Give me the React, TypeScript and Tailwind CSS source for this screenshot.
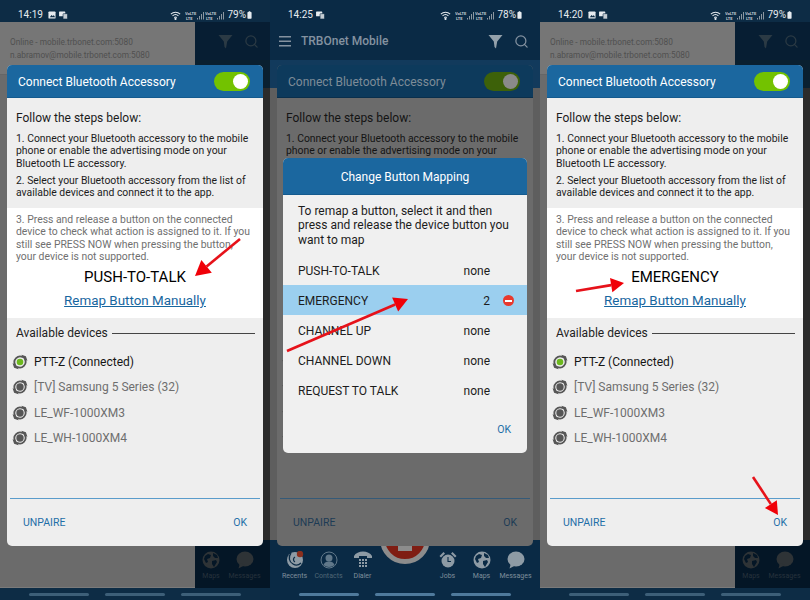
import { Search } from "lucide-react";

const font = "font-['Roboto',sans-serif]";

const SignalIcon = () => (
  <svg width="19" height="9" viewBox="0 0 19 9" className="ml-[1px]">
    <text x="0" y="4" fontSize="4" fontFamily="Roboto" fontWeight="700" fill="#c2cad1">VoLTE</text>
    <text x="1" y="8.5" fontSize="4" fontFamily="Roboto" fontWeight="700" fill="#c2cad1">LTE</text>
    <path d="M12 8.5h1V7h-1zM14 8.5h1V5h-1zM16 8.5h1V3h-1zM18 8.5h1V1h-1z" fill="#8b97a1" />
  </svg>
);

const StatusBar = ({ time, pct, photo }: { time: string; pct: string; photo: boolean }) => (
  <div className="h-[22px] shrink-0 flex items-center pl-[18px] pr-[18px] text-[#e6ebef] pt-[8px]">
    <span className="text-[10px] leading-none">{time}</span>
    {photo && (
      <svg width="8" height="8" viewBox="0 0 9 9" className="ml-[5px]">
        <rect x="0.5" y="0.5" width="8" height="8" rx="1" fill="#e6ebef" />
        <path d="M2 7l2-2.5 1.5 1.5L6.5 4.500 8 7z" fill="#0d2c45" />
      </svg>
    )}
    <svg width="9" height="8" viewBox="0 0 10 9" className="ml-[3px]">
      <rect x="0" y="0.5" width="7" height="5.5" rx="0.5" fill="#e6ebef" />
      <rect x="4.5" y="3" width="5" height="6" rx="0.5" fill="#c4ccd3" stroke="#0d2c45" strokeWidth="0.7" />
    </svg>
    <div className="ml-auto flex items-center">
      <svg width="11" height="9" viewBox="0 0 13 10" fill="none" stroke="#e6ebef" strokeWidth="1.2" className="mr-[3px]">
        <path d="M1 3.5C4 .5 9 .5 12 3.5M3 5.500c2-2 5-2 7 0M5 7.500c1-1 2-1 3 0" />
        <circle cx="6.5" cy="9" r="0.7" fill="#e6ebef" />
      </svg>
      <SignalIcon />
      <SignalIcon />
      <span className="text-[10px] leading-none ml-[3px]">{pct}</span>
      <svg width="5" height="8" viewBox="0 0 6 9" className="ml-[1px]">
        <rect x="0.5" y="1" width="5" height="8" rx="0.8" fill="#e6ebef" />
        <rect x="2" y="0" width="2" height="1" fill="#e6ebef" />
      </svg>
    </div>
  </div>
);

const Funnel = ({ color }: { color: string }) => (
  <svg width="15" height="15" viewBox="0 0 15 15">
    <path d="M0.5 1h14L9.2 7.500 8 14.500 6.500 13 5.800 7.500z" fill={color} />
  </svg>
);

const BtIcon = ({ on, ring = "#565656" }: { on?: boolean; ring?: string }) => (
  <svg width="16" height="16" viewBox="0 0 16 16" className="shrink-0">
    <path d="M3.300 11A5.600 5.600 0 0 1 11 3.300M12.700 5A5.600 5.600 0 0 1 5 12.700" fill="none" stroke={ring} strokeWidth="1.800" />
    <path d="M0.600 9.300l1.500 4.400 4.400 1.500-1-2.600-2.300-2.300zM15.400 6.700l-1.500-4.400-4.400-1.500 1 2.600 2.300 2.300z" fill={ring} />
    <circle cx="8" cy="8" r={on ? 3.3 : 3.7} fill={on ? "#6cb81e" : ring} />
  </svg>
);

const Toggle = ({ dim }: { dim?: boolean }) => (
  <div className={`w-[36px] h-[19px] rounded-full flex items-center justify-end pr-[2px] ${dim ? "bg-[#3d6109]" : "bg-[#73c200]"}`}>
    <div className={`w-[15px] h-[15px] rounded-full ${dim ? "bg-[#8a8a8a]" : "bg-white"}`} />
  </div>
);

const devices = ["[TV] Samsung 5 Series (32)", "LE_WF-1000XM3", "LE_WH-1000XM4"];

const Arrow = ({ x1, y1, x2, y2, size = 13 }: { x1: number; y1: number; x2: number; y2: number; size?: number }) => {
  const a = Math.atan2(y2 - y1, x2 - x1);
  const bx = x2 - Math.cos(a) * size;
  const by = y2 - Math.sin(a) * size;
  const w = size * 0.55;
  const p1 = `${bx - Math.sin(a) * w},${by + Math.cos(a) * w}`;
  const p2 = `${bx + Math.sin(a) * w},${by - Math.cos(a) * w}`;
  return (
    <svg width="270" height="600" viewBox="0 0 270 600" className="absolute left-0 top-0 pointer-events-none">
      <line x1={x1} y1={y1} x2={bx} y2={by} stroke="#e6121a" strokeWidth="2.6" />
      <polygon points={`${x2},${y2} ${p1} ${p2}`} fill="#f00008" />
    </svg>
  );
};

const DialogFooter = ({ dim }: { dim?: boolean }) => (
  <>
    <div className={`mt-auto mx-[3px] h-px ${dim ? "bg-[#355a78]" : "bg-[#5a9ccb]"}`} />
    <div className={`h-[47px] shrink-0 flex items-center justify-between pl-[16px] pr-[16px] pt-[1px] text-[10.5px] ${dim ? "text-[#1d3b55]" : "text-[#1f6fa8]"}`}>
      <span>UNPAIRE</span>
      <span>OK</span>
    </div>
  </>
);

const DialogHeader = ({ dim }: { dim?: boolean }) => (
  <div className={`h-[33px] shrink-0 flex items-center justify-between pl-[11px] pr-[13px] border-b ${dim ? "bg-[#0d3a5c] border-[#0a2f4c]" : "bg-[#1b679f] border-[#145a8e]"}`}>
    <span className={`text-[12px] pt-[1px] ${dim ? "text-[#7e8c98]" : "text-white"}`}>Connect Bluetooth Accessory</span>
    <Toggle dim={dim} />
  </div>
);

const ConnectDialog = ({ label }: { label: string }) => (
  <div className="absolute left-[7px] top-[65px] w-[256px] h-[481px] rounded-[5px] overflow-hidden flex flex-col bg-[#eeeeee]">
    <DialogHeader />
    <div className="px-[9px] pt-[12px] text-[10.4px] leading-[12.3px] h-[110px] shrink-0 text-[#1c1c1c]">
      <div className="text-[12px] leading-[16px] mb-[7px]">Follow the steps below:</div>
      <p className="mb-[5px]">1. Connect your Bluetooth accessory to the mobile phone or enable the advertising mode on your Bluetooth LE accessory.</p>
      <p>2. Select your Bluetooth accessory from the list of available devices and connect it to the app.</p>
    </div>
    <div className="h-[110px] shrink-0 px-[9px] pt-[6px] bg-white">
      <p className="text-[10.4px] leading-[12.3px] text-[#707070]">3. Press and release a button on the connected device to check what action is assigned to it. If you still see PRESS NOW when pressing the button, your device is not supported.</p>
      <div className="text-center text-[15px] leading-[17px] text-black mt-[6px]">{label}</div>
      <div className="text-center text-[13.4px] leading-[17px] text-[#17669f] underline mt-[6px]">Remap Button Manually</div>
    </div>
    <div className="flex items-center pl-[9px] pr-[8px] mt-[7px] text-[12px] leading-[16px] text-[#222]">
      <span>Available devices</span>
      <div className="flex-1 h-px bg-[#444] ml-[4px]" />
    </div>
    <div className="flex flex-col mt-[8px] pl-[5px]">
      <div className="h-[25.5px] flex items-center gap-[6px] text-[12px] text-[#151515]">
        <BtIcon on />
        PTT-Z (Connected)
      </div>
      {devices.map((d) => (
        <div key={d} className="h-[25.5px] flex items-center gap-[6px] text-[12px] text-[#6e6e6e]">
          <BtIcon />
          {d}
        </div>
      ))}
    </div>
    <DialogFooter />
  </div>
);

// same dialog dimmed behind the mapping dialog, only what still shows is drawn
const DimDialog = () => (
  <div className="absolute left-[7px] top-[65px] w-[256px] h-[481px] rounded-[5px] overflow-hidden flex flex-col bg-[#6b6b6b]">
    <DialogHeader dim />
    <div className="px-[9px] pt-[12px] text-[10.4px] leading-[12.3px] h-[250px] shrink-0 text-[#141414]">
      <div className="text-[12px] leading-[16px] mb-[7px]">Follow the steps below:</div>
      <p className="whitespace-nowrap">1. Connect your Bluetooth accessory to the mobile</p>
      <p className="whitespace-nowrap">phone or enable the advertising mode on your</p>
    </div>
    <div className="flex flex-col pl-[5px] mt-[-2px]">
      {[0, 1, 2, 3].map((i) => (
        <div key={i} className="h-[25.5px] flex items-center">
          <BtIcon ring="#222222" />
        </div>
      ))}
    </div>
    <DialogFooter dim />
  </div>
);

const NavIcon = ({ name }: { name: string }) => {
  const c = "#8e9ba5";
  const bg = "#0a2a45";
  if (name === "Recents")
    return (
      <svg width="18" height="18" viewBox="0 0 18 18">
        <circle cx="9" cy="9" r="8" fill={c} />
        <path d="M5 2c-3 4-2 9 2 11 3 2 6 1 8-1M9 6c-2 1-2 4 0 5" fill="none" stroke={bg} strokeWidth="1.3" />
        <circle cx="14" cy="3" r="3.2" fill="#8a2f1e" />
      </svg>
    );
  if (name === "Contacts")
    return (
      <svg width="18" height="18" viewBox="0 0 18 18">
        <circle cx="9" cy="9" r="8" fill="none" stroke="#61788a" strokeWidth="1" />
        <circle cx="9" cy="7" r="3.5" fill="#61788a" />
        <path d="M3.500 14c1-3 3.500-3.500 5.500-3.500S13.500 11 14.500 14c-3 2.500-8 2.500-11 0z" fill="#61788a" />
      </svg>
    );
  if (name === "Dialer")
    return (
      <svg width="18" height="18" viewBox="0 0 18 18" fill={c}>
        <path d="M0 5C3-1 15-1 18 5v2h-5V5H5v2H0z" />
        {[5, 8, 11].map((x) =>
          [8, 11, 14].map((y) => <rect key={`${x}-${y}`} x={x} y={y} width="2" height="2" />)
        )}
      </svg>
    );
  if (name === "Jobs")
    return (
      <svg width="18" height="18" viewBox="0 0 18 18">
        <path d="M0.500 5L4.500 1 6 2.500 2 6.500zM17.500 5L13.500 1 12 2.500 16 6.500z" fill={c} />
        <circle cx="9" cy="10" r="6.5" fill={c} />
        <path d="M9 6v4.500h3" fill="none" stroke={bg} strokeWidth="1.1" />
      </svg>
    );
  if (name === "Maps") return <Globe fill={c} land={bg} />;
  return <Bubble fill={c} />;
};

const Globe = ({ fill, land }: { fill: string; land: string }) => (
  <svg width="18" height="18" viewBox="0 0 18 18">
    <circle cx="9" cy="9" r="8.5" fill={fill} />
    <path d="M3 5l3-2 3 1-1 3-3 1 1 3-2 1-2-4zM11 2l4 2 1 3-3 0-2-2zM10 10l4-1 1 2-3 5-2-3z" fill={land} />
  </svg>
);

const Bubble = ({ fill }: { fill: string }) => (
  <svg width="18" height="18" viewBox="0 0 18 18">
    <ellipse cx="9" cy="8" rx="8.5" ry="7.5" fill={fill} />
    <path d="M4 12l-1.500 5.500L9 14z" fill={fill} />
  </svg>
);

const NavItem = ({ name }: { name: string }) => (
  <div className="w-[31px] flex flex-col items-center">
    <NavIcon name={name} />
    <span className={`whitespace-nowrap leading-[10px] mt-[2px] ${name === "Contacts" ? "text-[#506675]" : ""}`}>{name}</span>
  </div>
);

const HomeBars = ({ bright }: { bright?: boolean }) => {
  const bar = `w-[60px] h-[3px] rounded-full ${bright ? "bg-[#4f7a9c]" : "bg-[#3d5f78]"}`;
  return (
    <div className="h-[12px] shrink-0 flex justify-center gap-[16px] pt-[5px]">
      <div className={bar} />
      <div className={bar} />
      <div className={bar} />
    </div>
  );
};

// phones 1 and 3: drawer open behind the dialog
const DrawerPhone = ({ time, pct, label, children }: { time: string; pct: string; label: string; children?: React.ReactNode }) => (
  <div className={`relative w-[270px] h-[600px] bg-[#0d2c45] flex flex-col overflow-hidden ${font}`}>
    <StatusBar time={time} pct={pct} photo />
    <div className="flex-1 flex min-h-0">
      <div className="w-[195px] bg-[#6b6b6b] border-b border-[#7a7a7a] flex flex-col">
        <div className="h-[53px] bg-[#767676] border-b border-[#666] pl-[10px] pt-[14px] text-[8.3px] leading-[12.5px] text-[#505050]">
          <div>Online - mobile.trbonet.com:5080</div>
          <div>n.abramov@mobile.trbonet.com:5080</div>
        </div>
      </div>
      <div className="flex-1 flex flex-col">
        <div className="h-[38px] bg-[#071e33] flex items-center justify-end gap-[11px] pr-[11px] text-[#2b3a44]">
          <Funnel color="#2b3a44" />
          <Search size={15} />
        </div>
        <div className="h-[28px] bg-[#0a2030]" />
        <div className="flex-1 bg-[#2b2b2b]" />
        <div className="h-[48px] bg-[#041626] flex items-end justify-between pl-[4px] pr-[10px] pb-[7px] text-[7px] text-[#27323c]">
          <div className="w-[24px] flex flex-col items-center">
            <Globe fill="#2e3336" land="#041626" />
            <span className="leading-[10px] mt-[2px]">Maps</span>
          </div>
          <div className="w-[31px] flex flex-col items-center">
            <Bubble fill="#2e3336" />
            <span className="leading-[10px] mt-[2px]">Messages</span>
          </div>
        </div>
      </div>
    </div>
    <HomeBars />
    <ConnectDialog label={label} />
    {children}
  </div>
);

const rows = [
  { name: "PUSH-TO-TALK", val: "none" },
  { name: "EMERGENCY", val: "2", on: true },
  { name: "CHANNEL UP", val: "none" },
  { name: "CHANNEL DOWN", val: "none" },
  { name: "REQUEST TO TALK", val: "none" },
];

const MiddlePhone = () => (
  <div className={`relative w-[270px] h-[600px] bg-[#0a2a45] flex flex-col overflow-hidden ${font}`}>
    <StatusBar time="14:25" pct="78%" photo={false} />
    <div className="h-[38px] shrink-0 flex items-center pl-[9px] pr-[11px] text-[#8492a0]">
      <svg width="13" height="11" viewBox="0 0 13 11" fill="#8492a0">
        <rect width="12" height="1.5" />
        <rect y="4.5" width="12" height="1.5" />
        <rect y="9" width="12" height="1.5" />
      </svg>
      <span className="ml-[9px] text-[12px] font-medium">TRBOnet Mobile</span>
      <div className="ml-auto flex items-center gap-[11px]">
        <Funnel color="#94a1ab" />
        <Search size={15} />
      </div>
    </div>
    <div className="h-[28px] shrink-0 bg-[#123a5c]" />
    <div className="flex-1 bg-[#5e5e5e]" />
    <div className="h-[48px] shrink-0 flex items-end justify-between pl-[9px] pr-[9px] pb-[7px] text-[7px] text-[#7f8f9c]">
      {["Recents", "Contacts", "Dialer"].map((n) => (
        <NavItem key={n} name={n} />
      ))}
      <div className="w-[48px]" />
      {["Jobs", "Maps", "Messages"].map((n) => (
        <NavItem key={n} name={n} />
      ))}
    </div>
    <HomeBars bright />
    <div className="absolute left-[110px] top-[514px] w-[50px] h-[50px] rounded-full bg-[#7f1d13] border-[5px] border-[#8c8c8c] flex justify-center pt-[27px]">
      <div className="w-[14px] h-[5px] bg-[#8c8c8c]" />
    </div>
    <DimDialog />
    <div className="absolute left-[13px] top-[158px] w-[244px] h-[295px] rounded-[5px] overflow-hidden bg-[#f0f0f0] flex flex-col">
      <div className="h-[37px] shrink-0 bg-[#1b679f] border-b border-[#145a8e] pt-[1px] flex items-center justify-center text-[12px] text-white">Change Button Mapping</div>
      <p className="px-[15px] pt-[9px] text-[12px] leading-[14.4px] text-[#1c1c1c] h-[60px] shrink-0">To remap a button, select it and then press and release the device button you want to map</p>
      {rows.map((r) => (
        <div key={r.name} className={`h-[30px] shrink-0 flex items-center pl-[15px] pt-[1px] text-[12px] text-[#1c1c1c] ${r.on ? "bg-[#9bcfef]" : ""}`}>
          <span>{r.name}</span>
          <span className="ml-auto w-[40px] text-right">{r.val}</span>
          <div className="w-[37px] flex justify-center">
            {r.on && (
              <div className="w-[11px] h-[11px] rounded-full bg-[#e8392e] flex items-center justify-center">
                <div className="w-[7px] h-[2px] bg-white" />
              </div>
            )}
          </div>
        </div>
      ))}
      <div className="flex-1 flex items-center justify-end pr-[16px] pt-[1px] text-[10.5px] text-[#1f6fa8]">OK</div>
    </div>
    <Arrow x1={17} y1={351} x2={138} y2={299} size={14} />
  </div>
);

export default function App() {
  return (
    <div className="w-[810px] h-[600px] flex overflow-hidden">
      <DrawerPhone time="14:19" pct="79%" label="PUSH-TO-TALK">
        <Arrow x1={240} y1={239} x2={195} y2={276} size={15} />
      </DrawerPhone>
      <MiddlePhone />
      <DrawerPhone time="14:20" pct="79%" label="EMERGENCY">
        <Arrow x1={36} y1={291} x2={84} y2={283} />
        <Arrow x1={213} y1={477} x2={238} y2={515} />
      </DrawerPhone>
    </div>
  );
}
